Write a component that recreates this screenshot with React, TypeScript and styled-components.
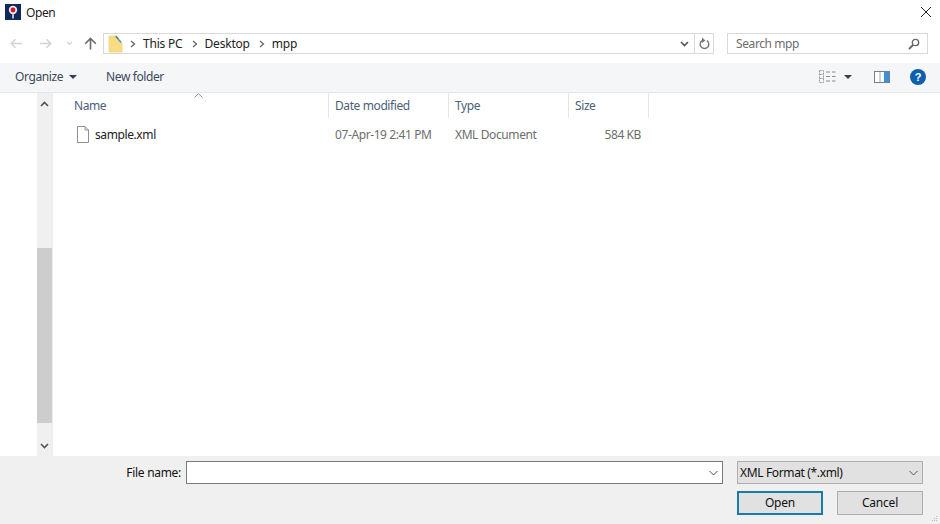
import React from "react";
import styled, { createGlobalStyle } from "styled-components";

const Global = createGlobalStyle`
  html, body {
    margin: 0;
    padding: 0;
    background: #fff;
  }
  * {
    box-sizing: border-box;
  }
`;

const Dialog = styled.div`
  width: 940px;
  height: 524px;
  display: flex;
  flex-direction: column;
  background: #fff;
  overflow: hidden;
  font-family: "Noto Sans", "Open Sans", sans-serif;
  font-size: 12px;
  letter-spacing: -0.4px;
  color: #1a1a1a;
  position: relative;
`;

const TitleBar = styled.div`
  height: 24px;
  display: flex;
  align-items: center;
  padding: 0 8px 0 5px;
  flex: none;
`;

const TitleText = styled.span`
  margin-left: 5px;
  color: #222;
`;

const CloseIcon = styled.svg`
  margin-left: auto;
  width: 12px;
  height: 12px;
`;

const NavRow = styled.div`
  height: 39px;
  flex: none;
  display: flex;
  align-items: flex-start;
  padding-top: 9px;
`;

const NavButton = styled.div<{ $w: number }>`
  width: ${(p) => p.$w}px;
  height: 21px;
  flex: none;
  display: flex;
  align-items: center;
  justify-content: center;
`;

const AddressBox = styled.div`
  width: 611px;
  height: 21px;
  margin-left: 3px;
  border: 1px solid #d9d9d9;
  display: flex;
  align-items: center;
  flex: none;
`;

const Crumb = styled.span`
  color: #222;
  letter-spacing: -0.2px;
`;

const CrumbArrow = styled.svg<{ $lead?: boolean }>`
  width: 6px;
  height: 8px;
  margin: 0 7px 0 ${(p) => (p.$lead ? 7 : 9)}px;
  flex: none;
`;

const AddressEnd = styled.div`
  margin-left: auto;
  display: flex;
  align-items: center;
  height: 100%;
`;

const RefreshCell = styled.div`
  width: 19px;
  height: 100%;
  border-left: 1px solid #d9d9d9;
  display: flex;
  align-items: center;
  justify-content: center;
`;

const ChevronCell = styled.div`
  width: 20px;
  display: flex;
  align-items: center;
  justify-content: center;
`;

const SearchBox = styled.div`
  width: 201px;
  height: 21px;
  margin-left: 13px;
  border: 1px solid #d9d9d9;
  display: flex;
  align-items: center;
  padding: 0 7px 0 8px;
  justify-content: space-between;
  color: #6d6d6d;
  flex: none;
`;

const CommandBar = styled.div`
  height: 30px;
  flex: none;
  background: #f5f6f7;
  border-bottom: 1px solid #e6e6e6;
  display: flex;
  align-items: center;
  padding: 0 14px 2px 15px;
  color: #3b4a5c;
`;

const CommandLabel = styled.span<{ $gap?: number }>`
  margin-left: ${(p) => p.$gap ?? 0}px;
`;

const Caret = styled.span<{ $gap: number }>`
  display: inline-block;
  width: 0;
  height: 0;
  margin-left: ${(p) => p.$gap}px;
  border-left: 4px solid transparent;
  border-right: 4px solid transparent;
  border-top: 4px solid #2f3f55;
`;

const CommandTools = styled.div`
  margin-left: auto;
  display: flex;
  align-items: center;
`;

const Main = styled.div`
  flex: 1;
  min-height: 0;
  display: flex;
`;

const Sidebar = styled.div`
  width: 37px;
  flex: none;
`;

const ScrollTrack = styled.div`
  width: 15px;
  flex: none;
  background: #f0f0f0;
  display: flex;
  flex-direction: column;
`;

const ScrollEnd = styled.div`
  height: 21px;
  flex: none;
  display: flex;
  align-items: center;
  justify-content: center;
`;

const ScrollSpace = styled.div<{ $h: number; $thumb?: boolean }>`
  height: ${(p) => p.$h}px;
  flex: none;
  background: ${(p) => (p.$thumb ? "#cdcdcd" : "transparent")};
`;

const ListPane = styled.div`
  flex: 1;
  min-width: 0;
  position: relative;
  border-left: 1px solid #eeeeee;
`;

const Columns = styled.div`
  display: grid;
  grid-template-columns: 276px 120px 120px 80px;
  height: 25px;
`;

const ColumnHead = styled.div<{ $first?: boolean }>`
  border-right: 1px solid #e5e5e5;
  padding-left: ${(p) => (p.$first ? 21 : 6)}px;
  display: flex;
  align-items: center;
  color: #4c607a;
`;

const SortArrow = styled.svg`
  position: absolute;
  left: 141px;
  top: 0;
  width: 9px;
  height: 5px;
`;

const FileRow = styled.div`
  display: grid;
  grid-template-columns: 276px 120px 120px 80px;
  height: 32px;
  align-items: center;
`;

const NameCell = styled.div`
  display: flex;
  align-items: center;
  padding-left: 23px;
  color: #222;
`;

const FileGlyph = styled.svg`
  width: 14px;
  height: 17px;
  margin-right: 5px;
  flex: none;
`;

const MetaCell = styled.div<{ $right?: boolean }>`
  padding: ${(p) => (p.$right ? "0 8px 0 0" : "0 0 0 6px")};
  text-align: ${(p) => (p.$right ? "right" : "left")};
  color: #6d6d6d;
`;

const Footer = styled.div`
  height: 68px;
  flex: none;
  background: #f0f0f0;
  padding: 5px 17px 0 0;
  display: grid;
  grid-template-columns: 186px 537px 14px 86px 14px 86px;
  grid-template-rows: 23px 24px;
  row-gap: 7px;
`;

const FileLabel = styled.label`
  grid-column: 1;
  display: flex;
  align-items: center;
  justify-content: flex-end;
  padding-right: 5px;
  color: #111;
  letter-spacing: -0.3px;
`;

const NameInput = styled.div`
  grid-column: 2;
  background: #fff;
  border: 1px solid #7a7a7a;
  display: flex;
  align-items: center;
  justify-content: flex-end;
`;

const TypeSelect = styled.div`
  grid-column: 4 / span 3;
  background: #e1e1e1;
  border: 1px solid #adadad;
  display: flex;
  align-items: center;
  justify-content: space-between;
  padding: 0 0 0 2px;
  color: #111;
  letter-spacing: -0.35px;
`;

const DialogButton = styled.div<{ $primary?: boolean; $col: number }>`
  grid-row: 2;
  grid-column: ${(p) => p.$col};
  background: #e1e1e1;
  border: ${(p) => (p.$primary ? "2px solid #1b7aa8" : "1px solid #adadad")};
  display: flex;
  align-items: center;
  justify-content: center;
  padding-bottom: 1px;
  color: #111;
  letter-spacing: -0.2px;
`;

const Grip = styled.svg`
  position: absolute;
  right: 2px;
  bottom: 2px;
  width: 6px;
  height: 6px;
`;

const Chevron = ({ color = "#555", w = 9, up = false, thin = false }: { color?: string; w?: number; up?: boolean; thin?: boolean }) => (
  <svg width={w} height={6} viewBox="0 0 9 6">
    <path d={up ? "M1 5 L4.5 1.5 L8 5" : "M1 1 L4.5 4.5 L8 1"} fill="none" stroke={color} strokeWidth={thin ? 1 : 1.6} />
  </svg>
);

const SelectChevron = () => (
  <svg width={17} height={6} viewBox="0 0 17 6">
    <path d="M4.5 1 L8.5 5 L12.5 1" fill="none" stroke="#555" strokeWidth={1} />
  </svg>
);

const CrumbMark = () => <path d="M1 1 L4.5 4 L1 7" fill="none" stroke="#666" strokeWidth="1.3" />;

const App = () => {
  return (
    <Dialog>
      <Global />
      <TitleBar>
        <svg width="16" height="16" viewBox="0 0 16 16">
          <rect width="16" height="16" fill="#0d2a5e" />
          <circle cx="8" cy="6" r="4.2" fill="#f3e6e6" />
          <circle cx="8" cy="6" r="2.4" fill="#d8141f" />
          <rect x="7.2" y="9.5" width="1.6" height="5" fill="#e8dede" />
        </svg>
        <TitleText>Open</TitleText>
        <CloseIcon viewBox="0 0 12 12">
          <path d="M1 1 L11 11 M11 1 L1 11" stroke="#222" strokeWidth="1" fill="none" />
        </CloseIcon>
      </TitleBar>

      <NavRow>
        <NavButton $w={32}>
          <svg width="13" height="11" viewBox="0 0 13 11">
            <path d="M12 5.5 H1.5 M5.5 1.2 L1.2 5.5 L5.5 9.8" fill="none" stroke="#d2d2d2" strokeWidth="1.4" />
          </svg>
        </NavButton>
        <NavButton $w={26}>
          <svg width="13" height="11" viewBox="0 0 13 11">
            <path d="M1 5.5 H11.5 M7.5 1.2 L11.8 5.5 L7.5 9.8" fill="none" stroke="#d2d2d2" strokeWidth="1.4" />
          </svg>
        </NavButton>
        <NavButton $w={22}>
          <svg width="7" height="5" viewBox="0 0 7 5">
            <path d="M1 1 L3.5 3.5 L6 1" fill="none" stroke="#d2d2d2" strokeWidth="1.2" />
          </svg>
        </NavButton>
        <NavButton $w={20}>
          <svg width="13" height="13" viewBox="0 0 13 13">
            <path d="M6.5 12.5 V1.8 M1.2 6.8 L6.5 1.5 L11.8 6.8" fill="none" stroke="#6a6a6a" strokeWidth="1.6" />
          </svg>
        </NavButton>
        <AddressBox>
          <svg width="15" height="18" viewBox="0 0 15 18" style={{ marginLeft: 4 }}>
            <path d="M1 1 H8 L14 8 V17 H1 Z" fill="#f8dc84" stroke="#ecd27e" strokeWidth="0.8" />
            <path d="M8 0.5 L11 3.6 L9.6 4.6 L7.4 1.8 Z" fill="#3f7f6a" />
            <path d="M10.6 3.4 L13.6 6.8 L12.4 8 L9.6 4.8 Z" fill="#5b9bd0" />
          </svg>
          <CrumbArrow $lead viewBox="0 0 6 8">
            <CrumbMark />
          </CrumbArrow>
          <Crumb>This PC</Crumb>
          <CrumbArrow viewBox="0 0 6 8">
            <CrumbMark />
          </CrumbArrow>
          <Crumb>Desktop</Crumb>
          <CrumbArrow viewBox="0 0 6 8">
            <CrumbMark />
          </CrumbArrow>
          <Crumb>mpp</Crumb>
          <AddressEnd>
            <ChevronCell>
              <Chevron />
            </ChevronCell>
            <RefreshCell>
              <svg width="11" height="13" viewBox="0 0 11 13">
                <path d="M7.8 3.6 A4.3 4.3 0 1 1 3.2 3.6" fill="none" stroke="#777" strokeWidth="1.4" />
                <path d="M3 0.6 L6.4 3.4 L3 6 Z" fill="#777" />
              </svg>
            </RefreshCell>
          </AddressEnd>
        </AddressBox>
        <SearchBox>
          <span>Search mpp</span>
          <svg width="12" height="12" viewBox="0 0 12 12">
            <circle cx="7.5" cy="4.5" r="3.2" fill="none" stroke="#666" strokeWidth="1.3" />
            <path d="M5 7 L1 11" stroke="#666" strokeWidth="1.8" />
          </svg>
        </SearchBox>
      </NavRow>

      <CommandBar>
        <CommandLabel>Organize</CommandLabel>
        <Caret $gap={6} />
        <CommandLabel $gap={29}>New folder</CommandLabel>
        <CommandTools>
          <svg width="17" height="13" viewBox="0 0 17 13">
            <path d="M0.5 0.5 H4.5 V12.5 H0.5 Z M0.5 4.5 H4.5 M0.5 8.5 H4.5" fill="none" stroke="#999" strokeWidth="1" strokeDasharray="2 1" />
            <path d="M7 2 H11 M13 2 H16.5 M7 6.5 H11 M13 6.5 H16.5 M7 11 H11 M13 11 H16.5" stroke="#8c8c8c" strokeWidth="1" />
          </svg>
          <Caret $gap={8} />
          <svg width="16" height="12" viewBox="0 0 16 12" style={{ marginLeft: 22 }}>
            <rect x="0.5" y="0.5" width="15" height="11" fill="#fff" stroke="#6f8193" />
            <rect x="10" y="1" width="5" height="10" fill="#3f8fd6" />
            <path d="M6 1 V11" stroke="#9aa7b3" />
          </svg>
          <svg width="16" height="16" viewBox="0 0 16 16" style={{ marginLeft: 20 }}>
            <circle cx="8" cy="8" r="8" fill="#0d5fb0" />
            <text x="8" y="12" textAnchor="middle" fontSize="11" fontWeight="700" fontFamily="Liberation Sans" fill="#fff">?</text>
          </svg>
        </CommandTools>
      </CommandBar>

      <Main>
        <Sidebar />
        <ScrollTrack>
          <ScrollEnd>
            <Chevron color="#505050" w={9} up />
          </ScrollEnd>
          <ScrollSpace $h={134} />
          <ScrollSpace $h={175} $thumb />
          <ScrollSpace $h={12} />
          <ScrollEnd>
            <Chevron />
          </ScrollEnd>
        </ScrollTrack>
        <ListPane>
          <SortArrow viewBox="0 0 9 5">
            <path d="M0.5 4.5 L4.5 0.8 L8.5 4.5" fill="none" stroke="#8a8a8a" strokeWidth="1" />
          </SortArrow>
          <Columns>
            <ColumnHead $first>Name</ColumnHead>
            <ColumnHead>Date modified</ColumnHead>
            <ColumnHead>Type</ColumnHead>
            <ColumnHead>Size</ColumnHead>
          </Columns>
          <FileRow>
            <NameCell>
              <FileGlyph viewBox="0 0 14 17">
                <path d="M1.5 0.5 H9 L12.5 4 V16.5 H1.5 Z M9 0.5 V4 H12.5" fill="#fff" stroke="#8f8f8f" strokeWidth="1" />
              </FileGlyph>
              sample.xml
            </NameCell>
            <MetaCell>07-Apr-19 2:41 PM</MetaCell>
            <MetaCell>XML Document</MetaCell>
            <MetaCell $right>584 KB</MetaCell>
          </FileRow>
        </ListPane>
      </Main>

      <Footer>
        <FileLabel>File name:</FileLabel>
        <NameInput>
          <SelectChevron />
        </NameInput>
        <TypeSelect>
          <span>XML Format (*.xml)</span>
          <SelectChevron />
        </TypeSelect>
        <DialogButton $primary $col={4}>Open</DialogButton>
        <DialogButton $col={6}>Cancel</DialogButton>
      </Footer>
      <Grip viewBox="0 0 6 6">
        <path d="M4 0 h1 v1 h-1 Z M2 2 h1 v1 h-1 Z M4 2 h1 v1 h-1 Z M0 4 h1 v1 h-1 Z M2 4 h1 v1 h-1 Z M4 4 h1 v1 h-1 Z" fill="#b8b8b8" />
      </Grip>
    </Dialog>
  );
};

export default App;
